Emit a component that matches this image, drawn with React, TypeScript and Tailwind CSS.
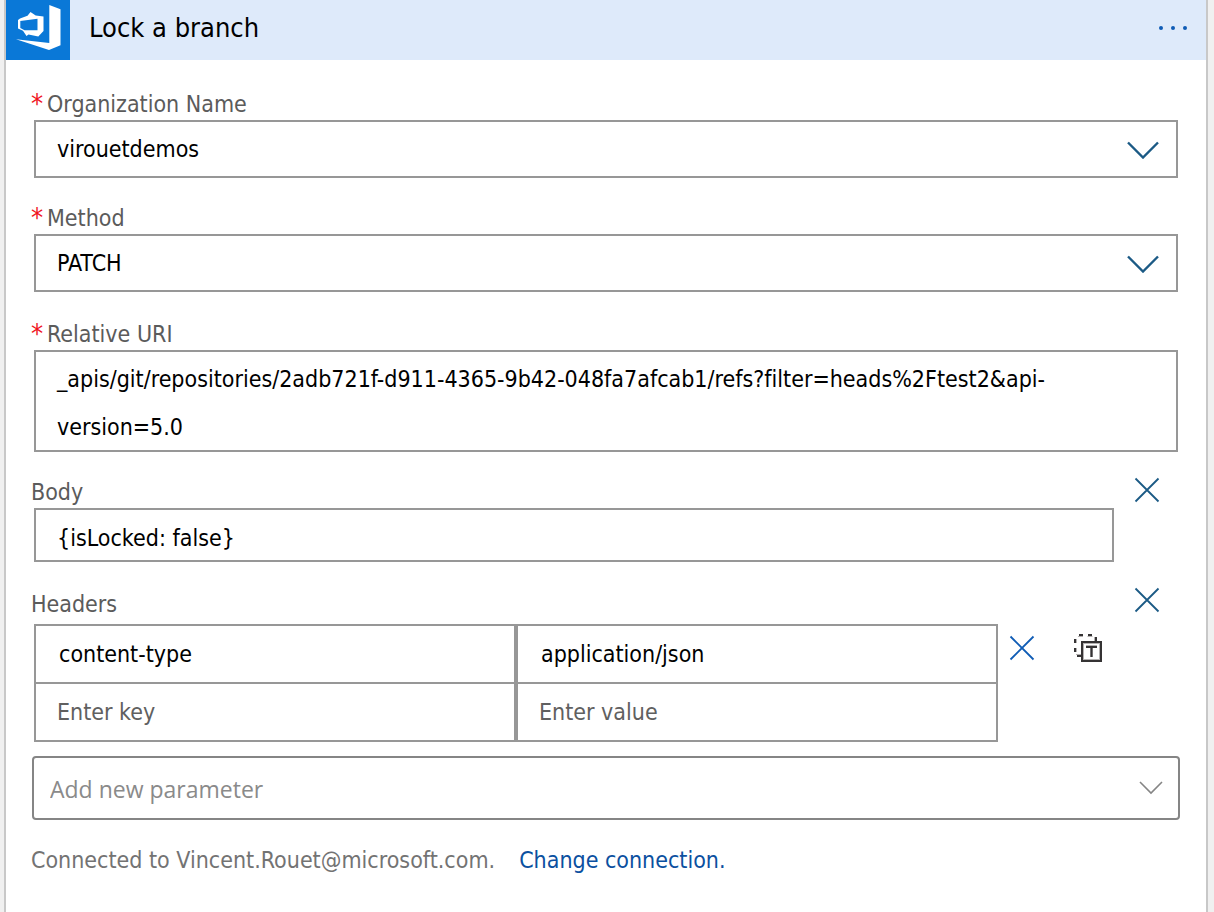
import { useState } from "react";
import type { ReactNode } from "react";

const boxClass = "border-2 border-[#979797] bg-white text-black outline-none";

function AzureDevOpsLogo() {
  return (
    <svg viewBox="0 0 64 60" className="h-[60px] w-16" aria-hidden="true">
      <rect width="64" height="60" fill="#0a78d7" />
      <path d="M43.300 5 L54.500 9.300 V45.300 L43 50 L10 39.300 L43.300 43 Z" fill="#fff" />
      <path
        fillRule="evenodd"
        d="M12 20 L14 18.500 L21.500 15.800 L24.500 12 L29.700 15.500 L37.500 16.500 V31 L32.300 36.500 L22.500 34.500 L20.500 36 L17 30.800 L12 28.500 Z M14.300 21 V28 L18.500 30.300 H31.500 V18.700 Z"
        fill="#fff"
      />
    </svg>
  );
}

function CrossIcon() {
  return (
    <svg viewBox="0 0 26 26" className="size-[26px]" fill="none" stroke="currentColor" strokeWidth="1.8" aria-hidden="true">
      <path d="M1.500 1.500 L24.500 24.500 M24.500 1.500 L1.500 24.500" />
    </svg>
  );
}

function TextModeIcon() {
  return (
    <svg viewBox="0 0 28 28" className="size-7" aria-hidden="true">
      <path d="M4 2.500h5M13.500 2.500h5M2.500 5v4M2.500 14v4M2 20.500h5M20.500 3v4" stroke="#b5b2b2" fill="none" />
      <path d="M5 1h4M14 1h4M1 5v4M1 14v4M3 22h5M22 3v4" stroke="#353334" strokeWidth="2" fill="none" />
      <rect x="8" y="8" width="19" height="19" fill="#fff" stroke="#353334" strokeWidth="2" />
      <rect x="9.500" y="9.500" width="16" height="16" fill="none" stroke="#b5b2b2" />
      <path d="M12 11.500h11M16.500 14v9M18.500 14v9" stroke="#b5b2b2" fill="none" />
      <path d="M12 13h11M17.500 13v10" stroke="#353334" strokeWidth="2" fill="none" />
    </svg>
  );
}

function FieldLabel({ htmlFor, required, children }: { htmlFor?: string; required?: boolean; children: ReactNode }) {
  return (
    <label htmlFor={htmlFor} className="flex h-8 items-center gap-1 text-[#5b5b5b]">
      {required && <span className="w-3 text-[27px] leading-8 text-[#f0141e]">*</span>}
      {children}
    </label>
  );
}

function SelectField({ id, label, value }: { id: string; label: string; value: string }) {
  return (
    <div>
      <FieldLabel htmlFor={id} required>
        {label}
      </FieldLabel>
      <div className="relative ml-[3px] mr-1">
        <select id={id} defaultValue={value} className={`block h-[58px] w-full appearance-none px-[21px] pt-px ${boxClass}`}>
          <option>{value}</option>
        </select>
        <svg
          viewBox="0 0 32 18"
          className="pointer-events-none absolute right-[19px] top-[21px] h-[18px] w-8"
          fill="none"
          stroke="#1b5a85"
          strokeWidth="2.400"
          aria-hidden="true"
        >
          <path d="M1 1.500 L16 16.500 L31 1.500" />
        </svg>
      </div>
    </div>
  );
}

export default function App() {
  const [uri, setUri] = useState(
    "_apis/git/repositories/2adb721f-d911-4365-9b42-048fa7afcab1/refs?filter=heads%2Ftest2&api-version=5.0",
  );
  const cell = "h-14 w-full bg-white text-black outline-none placeholder:text-[#606060] placeholder:opacity-100";

  return (
    <div className="min-h-screen bg-[#f0f0f0] pl-1 pr-1.5 font-['DejaVu_Sans_Condensed','DejaVu_Sans',sans-serif] text-[23px] [font-variant-ligatures:none]">
      <main className="min-h-screen border-x-2 border-[#c8c8c8] bg-white pb-9">
        <header className="flex h-[60px] items-center bg-[#deeafa]">
          <AzureDevOpsLogo />
          <h1 className="ml-[19px] flex-1 pb-1 text-[27px] leading-9 text-black">Lock a branch</h1>
          <button type="button" aria-label="More options" className="mr-4 pb-1 text-[#0f5cb5]">
            <svg viewBox="0 0 32 8" className="h-2 w-8" fill="currentColor" aria-hidden="true">
              <circle cx="3" cy="4" r="2" />
              <circle cx="15" cy="4" r="2" />
              <circle cx="27" cy="4" r="2" />
            </svg>
          </button>
        </header>

        <form className="flex flex-col pl-[25px] pr-6 pt-7" onSubmit={(e) => e.preventDefault()}>
          <div className="flex flex-col gap-6">
            <SelectField id="organization" label="Organization Name" value="virouetdemos" />
            <SelectField id="method" label="Method" value="PATCH" />
          </div>

          <div className="mt-[26px]">
            <FieldLabel htmlFor="uri" required>
              Relative URI
            </FieldLabel>
            <div className="ml-[3px] mr-1">
              <textarea
                id="uri"
                rows={2}
                value={uri}
                onChange={(e) => setUri(e.target.value)}
                className={`block h-[102px] w-full resize-none overflow-hidden px-[21px] pt-[3px] leading-[48px] ${boxClass}`}
              />
            </div>
          </div>

          <div className="mt-6">
            <div className="flex items-start justify-between">
              <FieldLabel htmlFor="body">Body</FieldLabel>
              <button type="button" aria-label="Remove body" className="mr-[22px] mt-px text-[#1b5a85]">
                <CrossIcon />
              </button>
            </div>
            <div className="ml-[3px] mr-[68px]">
              <input id="body" defaultValue="{isLocked: false}" className={`block h-[54px] w-full px-[21px] pt-1.5 ${boxClass}`} />
            </div>
          </div>

          <div className="mt-6">
            <div className="flex h-[38px] items-start justify-between">
              <span className="flex h-9 items-center text-[#5b5b5b]">Headers</span>
              <button type="button" aria-label="Remove headers" className="mr-[22px] mt-px text-[#1b5a85]">
                <CrossIcon />
              </button>
            </div>
            <div className="ml-[3px] mr-1 flex items-start">
              <table aria-label="Headers" className="flex-1 table-fixed border-collapse">
                <tbody className="block w-full border-2 border-[#979797]">
                  <tr className="flex border-b-2 border-[#979797]">
                    <td className="flex-1 border-r-2 border-[#979797]">
                      <input aria-label="Header key" defaultValue="content-type" className={`${cell} px-[23px]`} />
                    </td>
                    <td className="flex-1 border-l-2 border-[#979797]">
                      <input aria-label="Header value" defaultValue="application/json" className={`${cell} px-[23px]`} />
                    </td>
                  </tr>
                  <tr className="flex">
                    <td className="flex-1 border-r-2 border-[#979797]">
                      <input aria-label="New header key" placeholder="Enter key" className={`${cell} px-[21px]`} />
                    </td>
                    <td className="flex-1 border-l-2 border-[#979797]">
                      <input aria-label="New header value" placeholder="Enter value" className={`${cell} px-[21px]`} />
                    </td>
                  </tr>
                </tbody>
              </table>
              <div className="flex w-[180px] items-center gap-[39px] pl-[11px] pt-2.5">
                <button type="button" aria-label="Remove header" className="text-[#0f5cb5]">
                  <CrossIcon />
                </button>
                <button type="button" aria-label="Switch to text mode">
                  <TextModeIcon />
                </button>
              </div>
            </div>
          </div>

          <div className="relative ml-px mr-0.5 mt-3.5">
            <select
              aria-label="Add new parameter"
              defaultValue=""
              className="block h-16 w-full appearance-none rounded-[4px] border-2 border-[#858585] bg-white px-4 pt-0.5 font-['Open_Sans',sans-serif] text-[#8a8a8a] outline-none"
            >
              <option value="">Add new parameter</option>
            </select>
            <svg
              viewBox="0 0 24 14"
              className="pointer-events-none absolute right-[17px] top-[25px] h-3.5 w-6"
              fill="none"
              stroke="#858585"
              strokeWidth="1.600"
              aria-hidden="true"
            >
              <path d="M1 1 L12 12 L23 1" />
            </svg>
          </div>

          <p className="mt-6 flex flex-wrap gap-x-6 leading-8 text-[#737373]">
            <span>Connected to Vincent.Rouet@microsoft.com.</span>
            <a href="#change-connection" className="text-[#0b50a0]">
              Change connection.
            </a>
          </p>
        </form>
      </main>
    </div>
  );
}
